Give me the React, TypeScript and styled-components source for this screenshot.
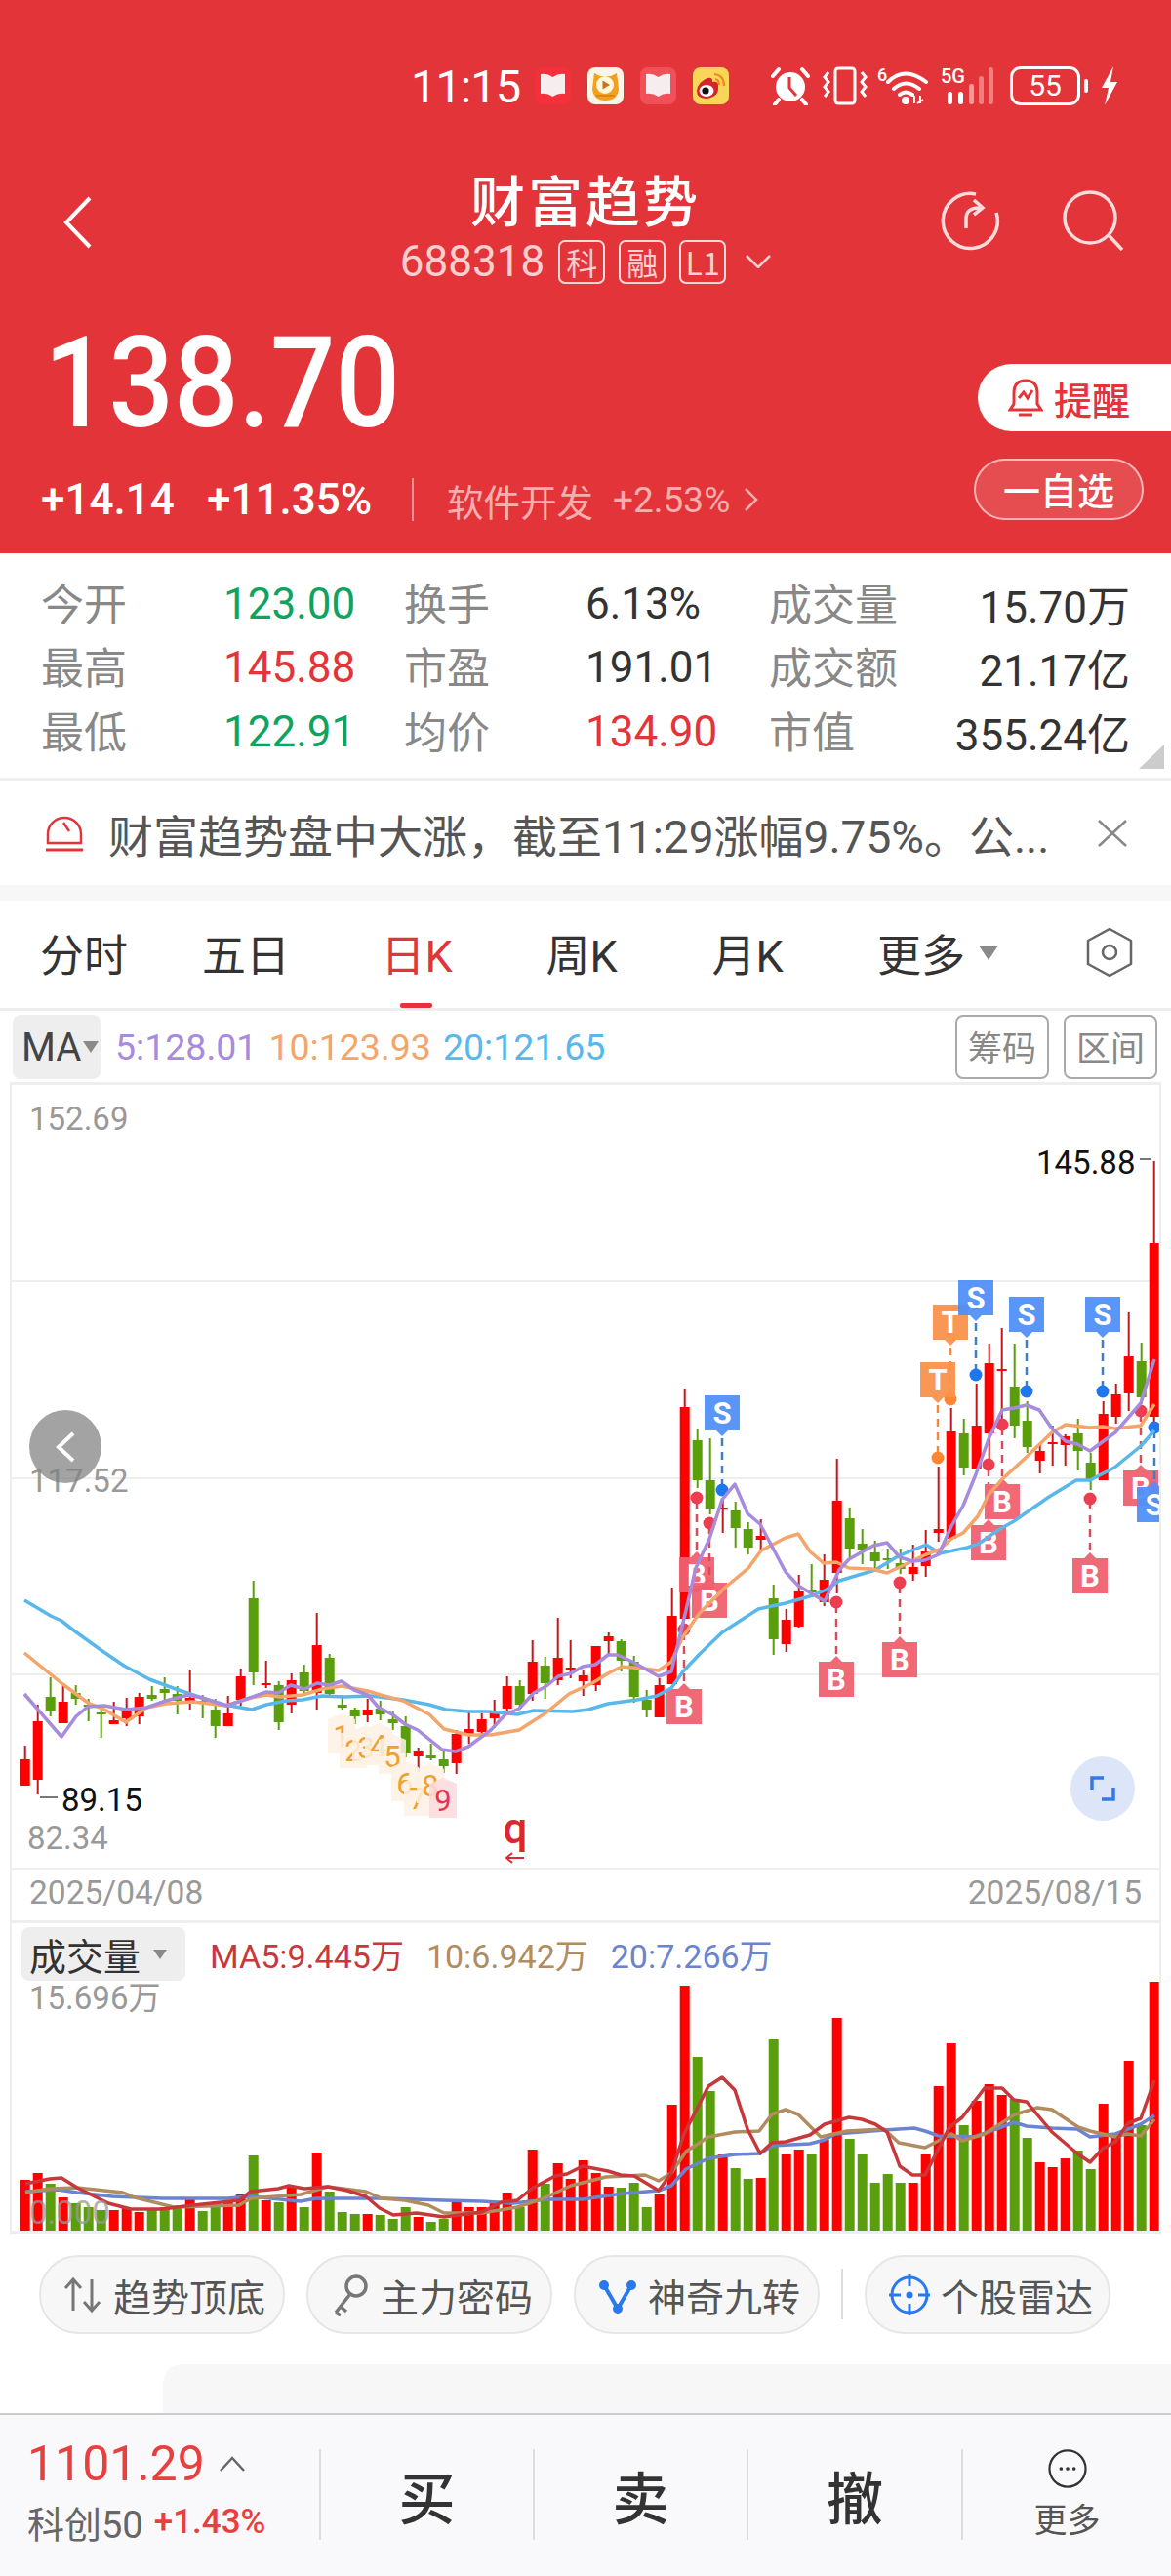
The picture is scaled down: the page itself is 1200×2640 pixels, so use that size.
import React from 'react';
import styled, { createGlobalStyle } from 'styled-components';

const GlobalStyle = createGlobalStyle`
  html, body { margin: 0; padding: 0; background: #fff; }
  * { box-sizing: border-box; }
  body { font-family: Roboto, "Noto Sans CJK SC", sans-serif; }
`;

const Page = styled.div`
  width: 1200px;
  height: 2640px;
  overflow: hidden;
  display: flex;
  flex-direction: column;
  background: #fff;
`;

/* header */
const Header = styled.header`
  height: 567px;
  flex: none;
  background: #e33539;
  color: #fff;
`;

const StatusBar = styled.div`
  height: 176px;
  padding-left: 421px;
  display: flex;
  align-items: center;
`;

const Time = styled.span`
  font-size: 47px;
  letter-spacing: -1px;
  width: 127px;
  flex: none;
`;

const AppIcons = styled.div`
  display: flex;
  gap: 17px;
  margin-right: 43px;
`;

const SysIcons = styled.div`
  display: flex;
  align-items: center;
`;

const Battery = styled.div`
  width: 72px;
  height: 40px;
  margin-left: 15px;
  border: 3px solid #fff;
  border-radius: 11px;
  font-size: 30px;
  line-height: 34px;
  text-align: center;
  position: relative;
  &::after {
    content: '';
    position: absolute;
    right: -11px;
    top: 10px;
    width: 4px;
    height: 14px;
    border-radius: 2px;
    background: #fff;
  }
`;

const NavBar = styled.div`
  height: 120px;
  display: grid;
  grid-template-columns: 1fr auto 1fr;
`;

const NavBack = styled.div`
  padding: 25px 0 0 63px;
`;

const NavCenter = styled.div`
  display: flex;
  flex-direction: column;
  align-items: center;
`;

const NavTitle = styled.div`
  font-family: "Noto Sans CJK SC", sans-serif;
  font-size: 56px;
  line-height: 54px;
  font-weight: 500;
  letter-spacing: 3px;
`;

const NavSub = styled.div`
  margin-top: 12px;
  display: flex;
  align-items: center;
  color: #f9cfcf;
  font-size: 44px;
`;

const Badge = styled.span`
  width: 48px;
  height: 45px;
  margin-left: 14px;
  border: 2px solid #f9dada;
  border-radius: 7px;
  font-family: "Noto Sans CJK SC", sans-serif;
  font-size: 32px;
  line-height: 40px;
  text-align: center;
`;

const NavActions = styled.div`
  display: flex;
  justify-content: flex-end;
  gap: 62px;
  padding: 18px 48px 0 0;
`;

const Quote = styled.div`
  height: 271px;
  display: flex;
  justify-content: space-between;
`;

const QuoteLeft = styled.div`
  padding-left: 42px;
`;

const Price = styled.div`
  margin: 47px 0 0 3px;
  font-size: 130px;
  line-height: 100px;
  font-weight: 500;
  transform: scaleX(0.9);
  transform-origin: left center;
`;

const ChangeRow = styled.div`
  margin-top: 47px;
  height: 44px;
  display: flex;
  align-items: center;
  font-size: 44px;
  font-weight: 500;
`;

const ChangeValue = styled.span<{ $width: number }>`
  width: ${({ $width }) => $width}px;
`;

const Sector = styled.div`
  height: 44px;
  padding-left: 34px;
  border-left: 2px solid rgba(255, 255, 255, 0.45);
  display: flex;
  align-items: center;
  color: #f6aeae;
  font-weight: 400;
  font-size: 37.5px;
`;

const SectorChange = styled.span`
  margin: 0 14px 0 20px;
  font-size: 37px;
`;

const QuoteRight = styled.div`
  display: flex;
  flex-direction: column;
  align-items: flex-end;
  padding-top: 77px;
`;

const RemindButton = styled.div`
  width: 198px;
  height: 69px;
  padding-left: 31px;
  display: flex;
  align-items: center;
  gap: 11px;
  background: #fff;
  border-radius: 35px 0 0 35px;
  color: #e33539;
  font-family: "Noto Sans CJK SC", sans-serif;
  font-size: 39px;
  font-weight: 500;
  line-height: 62px;
`;

const FollowButton = styled.div`
  width: 174px;
  height: 63px;
  margin: 28px 28px 0 0;
  border: 2px solid rgba(255, 255, 255, 0.6);
  border-radius: 32px;
  background: rgba(255, 255, 255, 0.12);
  font-family: "Noto Sans CJK SC", sans-serif;
  font-size: 38px;
  font-weight: 500;
  line-height: 57px;
  text-align: center;
`;

/* stats */
const Stats = styled.section`
  position: relative;
  height: 233px;
  flex: none;
  padding: 19px 42px 0 42px;
  display: grid;
  grid-template-columns: 187px 185px 186px 188px 140px 1fr;
  grid-auto-rows: 65.5px;
  align-items: center;
  border-bottom: 3px solid #eee;
  &::after {
    content: '';
    position: absolute;
    right: 7px;
    bottom: 9px;
    border-style: solid;
    border-width: 0 0 25px 26px;
    border-color: transparent transparent #ccc transparent;
  }
`;

const StatLabel = styled.span`
  margin-top: -4px;
  color: #888;
  font-family: "Noto Sans CJK SC", sans-serif;
  font-size: 44px;
`;

const StatValue = styled.span<{ $tone?: 'up' | 'down'; $end?: boolean }>`
  color: ${({ $tone }) => ($tone === 'up' ? '#e33539' : $tone === 'down' ? '#0fa35f' : '#333')};
  font-size: 44px;
  text-align: ${({ $end }) => ($end ? 'right' : 'left')};
`;

/* news */
const News = styled.section`
  height: 123px;
  flex: none;
  padding: 0 45px 0 46px;
  display: flex;
  align-items: center;
  gap: 25px;
  color: #555;
  font-size: 46px;
  border-bottom: 16px solid #f7f7f7;
`;

const NewsText = styled.span`
  flex: 1;
  white-space: nowrap;
  font-family: Roboto, "Noto Sans CJK SC", sans-serif;
`;

/* tabs */
const Tabs = styled.nav`
  height: 113px;
  flex: none;
  padding-left: 1px;
  display: grid;
  grid-template-columns: 170px 162px 188px 150px 190px 200px 152px;
  border-bottom: 3px solid #eee;
`;

const Tab = styled.div<{ $active?: boolean }>`
  position: relative;
  display: flex;
  align-items: center;
  justify-content: center;
  gap: 14px;
  padding-bottom: 4px;
  color: ${({ $active }) => ($active ? '#e33539' : '#333')};
  font-family: Roboto, "Noto Sans CJK SC", sans-serif;
  font-size: 45px;
  &::after {
    content: '';
    display: ${({ $active }) => ($active ? 'block' : 'none')};
    position: absolute;
    left: 77px;
    bottom: 0;
    width: 33px;
    height: 5px;
    border-radius: 2px;
    background: #e33539;
  }
`;

const Caret = styled.span<{ $size?: number }>`
  border-style: solid;
  border-width: ${({ $size = 15 }) => `${$size}px ${$size * 0.72}px 0`};
  border-color: #8a8a8a transparent transparent;
`;

const MaRow = styled.div`
  height: 73px;
  flex: none;
  padding: 4px 14px 3px 13px;
  display: flex;
  align-items: center;
  font-size: 37.5px;
`;

const MaSelect = styled.div`
  width: 90px;
  height: 66px;
  margin-right: 15px;
  padding-left: 9px;
  display: flex;
  align-items: center;
  gap: 2px;
  background: #eee;
  border-radius: 8px;
  color: #444;
  font-size: 40px;
`;

const MaValue = styled.span<{ $color: string }>`
  margin-right: 12px;
  color: ${({ $color }) => $color};
`;

const ToolGroup = styled.div`
  margin-left: auto;
  display: flex;
  gap: 15px;
`;

const ToolButton = styled.div`
  width: 96px;
  height: 66px;
  border: 2px solid #aaa;
  border-radius: 8px;
  color: #888;
  font-family: "Noto Sans CJK SC", sans-serif;
  font-size: 35px;
  line-height: 60px;
  text-align: center;
`;

/* chart panels */
const PricePanel = styled.div`
  position: relative;
  height: 859px;
  flex: none;
  margin: 0 10px;
  border: solid #eee;
  border-width: 3px 2px 0;
`;

const ChartSvg = styled.svg`
  display: block;
`;

const CollapseButton = styled.div`
  position: absolute;
  left: 18px;
  top: 333px;
  width: 74px;
  height: 75px;
  display: flex;
  align-items: center;
  justify-content: center;
  border-radius: 50%;
  background: rgba(128, 128, 128, 0.72);
`;

const ExpandButton = styled.div`
  position: absolute;
  left: 1085px;
  top: 688px;
  width: 66px;
  height: 66px;
  display: flex;
  align-items: center;
  justify-content: center;
  border-radius: 50%;
  background: #dce6f8;
`;

const DateRow = styled.div`
  position: absolute;
  left: 18px;
  right: 18px;
  bottom: 8px;
  display: flex;
  justify-content: space-between;
  color: #999;
  font-size: 33.5px;
  line-height: 40px;
`;

const VolumePanel = styled.div`
  height: 322px;
  flex: none;
  margin: 0 10px;
  border: solid #eee;
  border-width: 3px 2px 4px;
`;

const VolumeHeader = styled.div`
  height: 59px;
  padding: 4px 0 0 10px;
  display: flex;
  align-items: center;
  font-size: 34px;
`;

const VolumeSelect = styled.div`
  width: 168px;
  height: 55px;
  margin-right: 25px;
  padding-left: 8px;
  display: flex;
  align-items: center;
  gap: 13px;
  background: #eee;
  border-radius: 8px;
  color: #333;
  font-family: "Noto Sans CJK SC", sans-serif;
  font-size: 38px;
`;

const VolumeValue = styled.span<{ $color: string }>`
  margin-right: 23px;
  color: ${({ $color }) => $color};
`;

/* chips */
const ChipRow = styled.div`
  height: 133px;
  flex: none;
  padding: 21px 0 0 40px;
  display: flex;
  align-items: flex-start;
  gap: 22px;
`;

const Chip = styled.div`
  width: 252px;
  height: 81px;
  padding-left: 23px;
  display: flex;
  align-items: center;
  gap: 11px;
  background: #f7f7f7;
  border: 2px solid #e6e6e6;
  border-radius: 40px;
  color: #555;
  font-family: "Noto Sans CJK SC", sans-serif;
  font-size: 39px;
`;

const ChipDivider = styled.div`
  width: 2px;
  height: 52px;
  margin-top: 14px;
  background: #ddd;
`;

const AdStub = styled.div`
  height: 50px;
  flex: none;
  margin-left: 167px;
  background: #f7f7f8;
  border-radius: 20px 0 0 0;
`;

/* footer */
const Footer = styled.footer`
  flex: 1;
  padding-top: 35px;
  display: grid;
  grid-template-columns: 327px 219px 219px 220px 1fr;
  grid-template-rows: 93px;
  background: #f9f9fb;
  border-top: 2px solid #ccc;
`;

const IndexCell = styled.div`
  padding-left: 28px;
`;

const IndexPrice = styled.div`
  margin-top: -5px;
  height: 40px;
  display: flex;
  align-items: center;
  gap: 14px;
  color: #e8403f;
  font-size: 50px;
`;

const IndexRow = styled.div`
  margin-top: 19px;
  height: 40px;
  display: flex;
  align-items: center;
  gap: 11px;
  color: #666;
  font-size: 38px;
`;

const IndexChange = styled.span`
  color: #e8403f;
  font-size: 35px;
  font-weight: 500;
`;

const ActionCell = styled.div`
  display: flex;
  flex-direction: column;
  align-items: center;
  justify-content: center;
  border-left: 2px solid #ddd;
  color: #333;
  font-family: "Noto Sans CJK SC", sans-serif;
  font-size: 58px;
  font-weight: 500;
`;

const MoreLabel = styled.span`
  margin-top: 9px;
  color: #555;
  font-size: 34px;
  font-weight: 400;
  line-height: 44px;
`;

/* svg text */
const AxisText = styled.text<{ $dark?: boolean }>`
  fill: ${({ $dark }) => ($dark ? '#111' : '#999')};
  font-family: Roboto, "Noto Sans CJK SC", sans-serif;
  font-size: 33px;
  dominant-baseline: central;
`;

const MarkerText = styled.text`
  fill: #fff;
  font-family: Roboto, sans-serif;
  font-size: 31px;
  font-weight: 700;
  text-anchor: middle;
  dominant-baseline: central;
`;

const SeqText = styled.text<{ $last?: boolean }>`
  fill: ${({ $last }) => ($last ? '#e8334a' : '#f0a030')};
  font-family: Roboto, sans-serif;
  font-size: 31px;
  text-anchor: middle;
  dominant-baseline: central;
`;

const FlagText = styled.text`
  fill: #d9282f;
  font-family: Roboto, sans-serif;
  font-size: 44px;
  font-weight: 500;
  text-anchor: middle;
`;

/* data, in page pixels: colour, body top, body bottom, high, low, volume top */
type Candle = ['r' | 'g', number, number, number, number, number];

const candles: Candle[] = [
  ['r', 1803, 1830, 1789, 1830, 2234], ['r', 1764, 1824, 1747, 1839, 2227], ['g', 1739, 1753, 1719, 1759, 2238],
  ['r', 1744, 1766, 1728, 1766, 2252], ['g', 1735, 1741, 1727, 1747, 2258], ['g', 1747, 1749, 1741, 1764, 2262],
  ['g', 1755, 1756, 1748, 1781, 2265], ['r', 1763, 1767, 1744, 1767, 2265], ['r', 1754, 1761, 1740, 1769, 2263],
  ['r', 1739, 1759, 1735, 1767, 2267], ['g', 1737, 1741, 1728, 1743, 2265], ['g', 1731, 1735, 1719, 1742, 2262],
  ['g', 1736, 1743, 1728, 1757, 2262], ['r', 1740, 1743, 1711, 1752, 2253], ['g', 1743, 1744, 1737, 1761, 2266],
  ['g', 1752, 1769, 1741, 1781, 2257], ['r', 1756, 1769, 1738, 1769, 2257], ['r', 1718, 1742, 1710, 1748, 2249],
  ['g', 1638, 1714, 1620, 1727, 2209], ['r', 1725, 1726, 1702, 1730, 2255], ['g', 1727, 1765, 1723, 1773, 2257],
  ['r', 1722, 1747, 1715, 1756, 2242], ['g', 1714, 1733, 1706, 1737, 2262], ['r', 1686, 1735, 1653, 1752, 2206],
  ['g', 1699, 1736, 1695, 1737, 2246], ['g', 1747, 1750, 1737, 1752, 2267], ['g', 1752, 1759, 1750, 1767, 2269],
  ['r', 1752, 1758, 1741, 1765, 2269], ['g', 1751, 1757, 1743, 1763, 2270], ['g', 1762, 1766, 1753, 1773, 2274],
  ['g', 1769, 1797, 1759, 1801, 2262], ['r', 1795, 1800, 1791, 1816, 2272], ['g', 1799, 1802, 1787, 1804, 2277],
  ['g', 1803, 1810, 1795, 1817, 2274], ['r', 1777, 1807, 1773, 1818, 2257], ['r', 1772, 1777, 1755, 1787, 2262],
  ['r', 1762, 1775, 1756, 1780, 2262], ['r', 1753, 1761, 1742, 1771, 2258], ['r', 1728, 1751, 1718, 1754, 2247],
  ['g', 1728, 1747, 1722, 1752, 2262], ['r', 1703, 1736, 1681, 1743, 2203], ['g', 1707, 1725, 1698, 1741, 2238],
  ['r', 1699, 1722, 1658, 1727, 2217], ['r', 1709, 1710, 1681, 1720, 2233], ['r', 1717, 1723, 1711, 1738, 2214],
  ['r', 1687, 1727, 1687, 1733, 2227], ['r', 1677, 1682, 1673, 1697, 2241], ['g', 1682, 1702, 1680, 1713, 2242],
  ['g', 1703, 1739, 1697, 1745, 2237], ['g', 1742, 1752, 1732, 1760, 2262], ['r', 1727, 1760, 1720, 1760, 2249],
  ['r', 1656, 1726, 1627, 1726, 2157], ['r', 1442, 1659, 1423, 1659, 2035], ['g', 1476, 1517, 1464, 1525, 2108],
  ['g', 1517, 1546, 1474, 1552, 2143], ['r', 1545, 1547, 1537, 1571, 2208], ['g', 1548, 1566, 1539, 1586, 2222],
  ['g', 1567, 1586, 1560, 1593, 2233], ['r', 1574, 1578, 1557, 1588, 2232], ['g', 1638, 1680, 1624, 1696, 2090],
  ['r', 1660, 1685, 1649, 1693, 2208], ['r', 1631, 1667, 1614, 1668, 2203], ['g', 1630, 1632, 1603, 1632, 2208],
  ['r', 1619, 1642, 1593, 1646, 2193], ['r', 1538, 1612, 1495, 1633, 2068], ['g', 1556, 1587, 1545, 1597, 2192],
  ['g', 1582, 1589, 1567, 1603, 2208], ['g', 1591, 1600, 1579, 1607, 2237], ['g', 1597, 1598, 1587, 1608, 2228],
  ['g', 1602, 1608, 1587, 1613, 2237], ['r', 1606, 1613, 1583, 1620, 2237], ['r', 1590, 1605, 1568, 1616, 2208],
  ['r', 1567, 1571, 1503, 1580, 2138], ['r', 1467, 1577, 1443, 1578, 2094], ['g', 1469, 1504, 1454, 1512, 2178],
  ['r', 1461, 1506, 1418, 1506, 2153], ['r', 1397, 1469, 1377, 1498, 2136], ['r', 1403, 1405, 1361, 1457, 2147],
  ['g', 1421, 1461, 1377, 1474, 2151], ['g', 1456, 1483, 1436, 1489, 2191], ['r', 1487, 1497, 1480, 1510, 2216],
  ['r', 1478, 1479, 1461, 1502, 2221], ['r', 1472, 1481, 1470, 1502, 2212], ['g', 1469, 1487, 1454, 1507, 2204],
  ['g', 1499, 1516, 1489, 1527, 2223], ['r', 1449, 1517, 1436, 1517, 2156], ['r', 1429, 1452, 1418, 1459, 2190],
  ['r', 1390, 1428, 1345, 1446, 2112], ['g', 1395, 1432, 1376, 1439, 2178], ['r', 1274, 1452, 1190, 1457, 2031],
];

const candleX = (i: number) => 25.7 + 13 * i;

const ma20 = '25,1640 52,1656 63,1661 77,1672 102,1690 127,1707 153,1721 180,1731 207,1740 230,1747 258,1752 273,1747 293,1743 310,1742 330,1738 353,1739 380,1738 413,1742 440,1747 457,1752 480,1754 500,1754 530,1757 547,1753 587,1754 603,1752 623,1746 653,1742 673,1738 688,1730 700,1713 717,1695 740,1673 777,1649 805,1643 833,1635 847,1629 860,1620 897,1609 920,1595 949,1583 963,1592 991,1586 1003,1582 1023,1568 1039,1559 1075,1534 1103,1517 1117,1517 1142,1504 1169,1482 1183,1466';
const ma10 = '25,1694 63,1725 90,1745 107,1752 129,1765 150,1750 170,1746 197,1744 232,1748 257,1740 273,1737 287,1739 310,1737 330,1731 350,1728 377,1733 390,1737 413,1743 440,1757 455,1772 480,1778 503,1778 532,1773 560,1755 583,1736 607,1725 623,1715 637,1708 660,1710 675,1712 688,1703 700,1677 717,1653 743,1627 767,1607 780,1589 805,1576 818,1572 830,1590 844,1602 857,1601 870,1607 893,1608 909,1612 922,1606 949,1593 963,1588 975,1577 987,1571 1002,1554 1013,1532 1027,1516 1052,1493 1078,1468 1092,1460 1117,1463 1130,1462 1143,1464 1169,1461 1183,1439';
const ma5 = '25,1736 63,1780 78,1759 90,1749 107,1748 129,1752 150,1750 170,1743 193,1737 207,1740 232,1748 250,1742 273,1734 285,1735 298,1727 312,1731 325,1725 337,1727 350,1723 363,1732 377,1737 388,1750 402,1757 415,1767 428,1773 453,1793 467,1795 480,1790 503,1773 518,1757 532,1751 547,1735 560,1728 572,1718 585,1715 597,1708 610,1706 623,1696 633,1696 648,1703 675,1718 688,1713 700,1663 713,1607 727,1577 740,1537 753,1521 766,1551 779,1562 805,1611 818,1625 845,1641 860,1609 870,1598 895,1584 909,1581 922,1596 935,1600 948,1599 962,1593 975,1564 987,1543 1000,1511 1013,1475 1027,1445 1039,1443 1052,1440 1065,1445 1078,1464 1092,1477 1104,1480 1117,1487 1143,1468 1169,1438 1183,1393';

const volBlue = '26,2246 59,2244 79,2247 115,2251 166,2253 233,2253 257,2251 308,2256 324,2253 395,2253 455,2255 494,2256 526,2258 561,2254 597,2254 638,2248 675,2245 688,2240 703,2223 726,2212 753,2208 779,2207 791,2199 830,2197 845,2193 856,2187 906,2183 937,2181 948,2184 962,2189 998,2190 1021,2182 1039,2175 1052,2179 1078,2181 1104,2182 1117,2190 1143,2187 1169,2177 1183,2168';
const volTan = '26,2247 51,2243 79,2242 126,2247 138,2252 178,2262 245,2260 257,2253 308,2249 336,2241 375,2246 391,2253 415,2255 439,2260 455,2268 494,2268 530,2262 557,2253 585,2240 621,2231 661,2229 675,2235 688,2227 703,2205 726,2190 753,2185 778,2184 791,2167 805,2162 818,2167 841,2190 868,2184 906,2182 921,2196 948,2201 975,2187 986,2194 1009,2187 1040,2167 1063,2160 1078,2162 1105,2180 1117,2184 1143,2190 1155,2187 1169,2189 1183,2172';
const volRed = '26,2238 51,2233 63,2232 79,2242 111,2258 134,2264 166,2264 198,2260 245,2255 257,2246 285,2243 296,2240 312,2243 336,2241 356,2245 375,2251 389,2263 403,2270 427,2268 455,2272 494,2267 514,2257 530,2255 545,2243 569,2230 581,2228 597,2220 623,2225 636,2229 650,2230 675,2245 688,2227 701,2187 726,2138 740,2129 753,2142 766,2182 779,2207 791,2196 805,2195 830,2188 845,2177 870,2170 883,2172 897,2177 909,2185 922,2220 935,2229 948,2229 973,2180 986,2170 1009,2140 1027,2140 1039,2152 1052,2154 1078,2185 1104,2207 1117,2216 1130,2202 1143,2195 1156,2176 1169,2171 1183,2132';

type Marker = { kind: 'S' | 'T' | 'B'; x: number; top: number; dot: number; up?: boolean };

const markers: Marker[] = [
  { kind: 'B', x: 714, top: 1596, dot: 1535 },
  { kind: 'B', x: 727, top: 1622, dot: 1561 },
  { kind: 'B', x: 701, top: 1731, dot: 1670 },
  { kind: 'B', x: 857, top: 1703, dot: 1642 },
  { kind: 'B', x: 922, top: 1683, dot: 1622 },
  { kind: 'B', x: 1013, top: 1563, dot: 1501 },
  { kind: 'B', x: 1027, top: 1521, dot: 1460 },
  { kind: 'B', x: 1117, top: 1597, dot: 1536 },
  { kind: 'B', x: 1169, top: 1507, dot: 1446 },
  { kind: 'T', x: 974, top: 1337, dot: 1434 },
  { kind: 'T', x: 961, top: 1396, dot: 1494 },
  { kind: 'S', x: 740, top: 1430, dot: 1527 },
  { kind: 'S', x: 1000, top: 1312, dot: 1409 },
  { kind: 'S', x: 1052, top: 1329, dot: 1426 },
  { kind: 'S', x: 1130, top: 1329, dot: 1426 },
  { kind: 'S', x: 1183, top: 1524, dot: 1463, up: true },
];

const markerColors = {
  S: { fill: '#4f8ff7', dot: '#1f77f0', dash: '#3f7fc8' },
  T: { fill: '#f9924a', dot: '#ff8533', dash: '#f28a3c' },
  B: { fill: '#f0606e', dot: '#ec3e50', dash: '#d94a5a' },
};

const sequence: [string, number, number][] = [
  ['1', 350, 1779], ['2', 362, 1794], ['3', 375, 1791], ['4', 388, 1789], ['5', 402, 1800],
  ['6', 415, 1828], ['7', 428, 1843], ['8', 441, 1830], ['9', 454, 1845],
];

const CandleMark = ({ c, i }: { c: Candle; i: number }) => {
  const [tone, top, bottom, high, low] = c;
  const x = candleX(i);
  const body = tone === 'r' ? '#ff0000' : '#5a9e0c';
  const wick = tone === 'r' ? '#c4161c' : '#5a9e0c';
  return (
    <g>
      <line x1={x} x2={x} y1={high} y2={low} stroke={wick} strokeWidth="2" />
      <rect x={x - 5} y={top} width="10" height={Math.max(bottom - top, 2)} fill={body} />
    </g>
  );
};

const SignalMark = ({ m }: { m: Marker }) => {
  const col = markerColors[m.kind];
  const tipUp = m.up || m.kind === 'B';
  const { x, top } = m;
  const shape = tipUp
    ? `M${x - 18} ${top}H${x - 6}L${x} ${top - 6}L${x + 6} ${top}H${x + 18}V${top + 36}H${x - 18}Z`
    : `M${x - 18} ${top}H${x + 18}V${top + 36}H${x + 6}L${x} ${top + 42}L${x - 6} ${top + 36}H${x - 18}Z`;
  const from = tipUp ? top - 8 : top + 44;
  return (
    <g>
      <line x1={x} x2={x} y1={from} y2={m.dot} stroke={col.dash} strokeWidth="2.5" strokeDasharray="8 6" />
      <circle cx={x} cy={m.dot} r="6.5" fill={col.dot} />
      <path d={shape} fill={col.fill} fillOpacity="0.94" />
      <MarkerText x={x} y={top + 18}>{m.kind}</MarkerText>
    </g>
  );
};

const PriceChart = () => (
  <ChartSvg width="1176" height="804" viewBox="12 1112 1176 804">
    {[1313, 1515, 1716].map((y) => (
      <line key={y} x1="12" x2="1188" y1={y} y2={y} stroke="#eee" strokeWidth="2" />
    ))}
    <line x1="12" x2="1188" y1="1915" y2="1915" stroke="#eee" strokeWidth="2" />
    <AxisText x="30" y="1146">152.69</AxisText>
    <AxisText x="30" y="1517">117.52</AxisText>
    <AxisText x="28" y="1883">82.34</AxisText>
    <AxisText $dark x="63" y="1844">89.15</AxisText>
    <line x1="41" x2="59" y1="1842" y2="1842" stroke="#777" strokeWidth="2" />
    <AxisText $dark x="1062" y="1191">145.88</AxisText>
    <line x1="1168" x2="1179" y1="1188" y2="1188" stroke="#777" strokeWidth="2" />
    {candles.map((c, i) => <CandleMark key={i} c={c} i={i} />)}
    {sequence.map(([n, x, y]) => (
      <g key={n}>
        <path
          d={`M${x - 14} ${y - 17}L${x} ${y - 23}L${x + 14} ${y - 17}V${y + 18}H${x - 14}Z`}
          fill={n === '9' ? '#fcd9dc' : '#fdf1e4'}
          fillOpacity="0.85"
        />
        <SeqText $last={n === '9'} x={x} y={y}>{n}</SeqText>
      </g>
    ))}
    {markers.map((m) => <SignalMark key={`${m.kind}${m.x}`} m={m} />)}
    <polyline points={ma20} fill="none" stroke="#5ab7ec" strokeWidth="3.5" strokeLinejoin="round" />
    <polyline points={ma10} fill="none" stroke="#f4a56a" strokeWidth="3.5" strokeLinejoin="round" />
    <polyline points={ma5} fill="none" stroke="#a78bdc" strokeWidth="3.5" strokeLinejoin="round" />
    <FlagText x="528" y="1889">q</FlagText>
    <path d="M537 1904H519M525 1899L519 1904L525 1909" fill="none" stroke="#d9282f" strokeWidth="2" />
  </ChartSvg>
);

const VolumeChart = () => (
  <ChartSvg width="1176" height="256" viewBox="12 2030 1176 256">
    <AxisText x="30" y="2047">15.696万</AxisText>
    {candles.map((c, i) => (
      <rect
        key={i}
        x={candleX(i) - 5}
        y={c[5]}
        width="10"
        height={2286 - c[5]}
        fill={c[0] === 'r' ? '#ff0000' : '#5a9e0c'}
      />
    ))}
    <polyline points={volBlue} fill="none" stroke="#6a84d0" strokeWidth="3.5" strokeLinejoin="round" />
    <polyline points={volTan} fill="none" stroke="#b08c5e" strokeWidth="3.5" strokeLinejoin="round" />
    <polyline points={volRed} fill="none" stroke="#c8383a" strokeWidth="3.5" strokeLinejoin="round" />
    <AxisText x="30" y="2267" opacity="0.75">0.000</AxisText>
  </ChartSvg>
);

/* icons */
const BookIcon = ({ bg }: { bg: string }) => (
  <svg width="37" height="38" viewBox="0 0 37 38">
    <rect width="37" height="38" rx="8" fill={bg} />
    <path d="M6 7Q13 6 18.5 10Q24 6 31 7V27Q24 26 18.5 30Q13 26 6 27Z" fill="#f6eeee" />
  </svg>
);

const CatIcon = () => (
  <svg width="37" height="38" viewBox="0 0 37 38">
    <rect width="37" height="38" rx="8" fill="#fbf5e8" />
    <path d="M7 6L13 9H24L30 6L32 22Q31 34 18.5 34Q6 34 5 22Z" fill="#f2a01e" />
    <circle cx="18" cy="18" r="9" fill="#fff6e0" />
    <path d="M15.5 13.5L23 18L15.5 22.5Z" fill="#c9711a" />
    <path d="M9 29H28" stroke="#d9861a" strokeWidth="2" />
  </svg>
);

const WeiboIcon = () => (
  <svg width="37" height="38" viewBox="0 0 37 38">
    <rect width="37" height="38" rx="8" fill="#f9d65a" />
    <path d="M4 24Q5 15 15 11Q21 10 20 15Q27 14 26 20Q27 30 14 32Q4 32 4 24Z" fill="#d8232a" />
    <ellipse cx="14" cy="24" rx="7.5" ry="6" fill="#fff" />
    <circle cx="13" cy="24" r="3.6" fill="#111" />
    <path d="M22 7Q32 8 32 19M23 12Q27 13 27 18" fill="none" stroke="#f08a1e" strokeWidth="2.2" />
  </svg>
);

const AlarmIcon = () => (
  <svg width="40" height="40" viewBox="0 0 40 40">
    <circle cx="20" cy="21" r="15" fill="#fff" />
    <path d="M19 11V22L26 30" fill="none" stroke="#e33539" strokeWidth="3" />
    <path d="M2 10L8 3M38 10L32 3M8 34L4 39M32 34L36 39" stroke="#fff" strokeWidth="4" strokeLinecap="round" />
  </svg>
);

const VibrateIcon = () => (
  <svg width="46" height="40" viewBox="0 0 46 40" style={{ marginLeft: 13 }}>
    <rect x="13" y="2" width="20" height="36" rx="3" fill="none" stroke="#fff" strokeWidth="3" />
    <path d="M6 6L2 11L6 16L2 21L6 26L2 31M40 6L44 11L40 16L44 21L40 26L44 31" fill="none" stroke="#fff" strokeWidth="3" />
  </svg>
);

const WifiIcon = () => (
  <svg width="54" height="40" viewBox="0 0 54 40" style={{ marginLeft: 10 }}>
    <text x="0" y="15" fill="#fff" fontFamily="Roboto, sans-serif" fontSize="18" fontWeight="500">6</text>
    <path d="M11 16Q28 -1 50 16M17 23Q29 12 43 23M23 29Q29 24 36 29" fill="none" stroke="#fff" strokeWidth="4" strokeLinecap="round" />
    <circle cx="29" cy="35" r="4" fill="#fff" />
    <path d="M38 38V30M44 30V38M41 38L47 34" stroke="#fff" strokeWidth="1.8" fill="none" />
  </svg>
);

const SignalIcon = () => (
  <svg width="56" height="40" viewBox="0 0 56 40" style={{ marginLeft: 11 }}>
    <text x="0" y="17" fill="#fff" fontFamily="Roboto, sans-serif" fontSize="20" fontWeight="500">5G</text>
    <rect x="7" y="26" width="5" height="13" rx="2.5" fill="#fff" />
    <rect x="18" y="26" width="5" height="13" rx="2.5" fill="#fff" />
    <rect x="29" y="18" width="5" height="21" rx="2.5" fill="#f59a9a" />
    <rect x="39" y="10" width="5" height="29" rx="2.5" fill="#ee8080" />
    <rect x="49" y="1" width="5" height="38" rx="2.5" fill="#ee8080" />
  </svg>
);

const BoltIcon = () => (
  <svg width="20" height="42" viewBox="0 0 20 42" style={{ marginLeft: 20 }}>
    <path d="M14 1L2 23H9L5 41L18 17H11Z" fill="#fff" />
  </svg>
);

const BackIcon = () => (
  <svg width="32" height="54" viewBox="0 0 32 54">
    <path d="M29 2L5 27L29 52" fill="none" stroke="#fff" strokeWidth="4" />
  </svg>
);

const ShareIcon = () => (
  <svg width="64" height="64" viewBox="0 0 64 64">
    <path d="M38 5A28 28 0 1 0 59 24" fill="none" stroke="#fbdcdc" strokeWidth="3.5" />
    <path d="M28 40V30Q28 19 42 19M36 11L45 19L36 26" fill="none" stroke="#fbdcdc" strokeWidth="3.5" />
  </svg>
);

const SearchIcon = () => (
  <svg width="64" height="64" viewBox="0 0 64 64">
    <circle cx="29" cy="29" r="26" fill="none" stroke="#fbdcdc" strokeWidth="3.5" />
    <path d="M49 48L62 62" stroke="#fbdcdc" strokeWidth="3.5" />
  </svg>
);

const SmallChevron = () => (
  <svg width="26" height="14" viewBox="0 0 26 14" style={{ marginLeft: 20 }}>
    <path d="M1 1L13 13L25 1" fill="none" stroke="#f9cfcf" strokeWidth="2.5" />
  </svg>
);

const SectorChevron = () => (
  <svg width="15" height="24" viewBox="0 0 15 24">
    <path d="M2 1L13 12L2 23" fill="none" stroke="#f6aeae" strokeWidth="2.5" />
  </svg>
);

const BellIcon = () => (
  <svg width="36" height="42" viewBox="0 0 36 42">
    <path d="M18 3Q6 3 6 16V27L2 33H34L30 27V16Q30 3 18 3Z" fill="none" stroke="#e33539" strokeWidth="3" />
    <path d="M11 38H25" stroke="#e33539" strokeWidth="3" />
    <path d="M11 21L16 15L20 21L25 13" fill="none" stroke="#e33539" strokeWidth="3" />
  </svg>
);

const LampIcon = () => (
  <svg width="40" height="40" viewBox="0 0 40 40">
    <path d="M3 30V21A17 17 0 0 1 37 21V30Z" fill="none" stroke="#e33539" strokeWidth="2.5" />
    <path d="M19 9L25 18" stroke="#e33539" strokeWidth="2.5" />
    <path d="M1 37H39" stroke="#e33539" strokeWidth="3" />
  </svg>
);

const CloseIcon = () => (
  <svg width="30" height="28" viewBox="0 0 30 28">
    <path d="M1 1L29 27M29 1L1 27" stroke="#888" strokeWidth="2.5" />
  </svg>
);

const HexIcon = () => (
  <svg width="48" height="52" viewBox="0 0 48 52">
    <path d="M24 2L46 14V38L24 50L2 38V14Z" fill="none" stroke="#666" strokeWidth="2.5" strokeLinejoin="round" />
    <circle cx="24" cy="26" r="7" fill="none" stroke="#666" strokeWidth="2.5" />
  </svg>
);

const ArrowsIcon = () => (
  <svg width="40" height="40" viewBox="0 0 40 40">
    <path d="M10 36V5M2 13L10 4L18 13" fill="none" stroke="#777" strokeWidth="3" />
    <path d="M29 4V35M21 27L29 36L37 27" fill="none" stroke="#777" strokeWidth="3" />
  </svg>
);

const KeyIcon = () => (
  <svg width="40" height="44" viewBox="0 0 40 44">
    <circle cx="26" cy="13" r="10" fill="none" stroke="#777" strokeWidth="3.5" />
    <path d="M20 21L5 40M10 34L16 39M5 40L10 43" fill="none" stroke="#777" strokeWidth="3.5" />
  </svg>
);

const NodesIcon = () => (
  <svg width="40" height="40" viewBox="0 0 40 40">
    <path d="M6 10L20 34L34 10" fill="none" stroke="#2878ee" strokeWidth="4" />
    <circle cx="6" cy="10" r="5" fill="#2878ee" />
    <circle cx="34" cy="10" r="5" fill="#2878ee" />
    <circle cx="20" cy="34" r="5" fill="#2878ee" />
  </svg>
);

const RadarIcon = () => (
  <svg width="42" height="44" viewBox="0 0 42 44">
    <circle cx="21" cy="22" r="18" fill="none" stroke="#2878ee" strokeWidth="3" />
    <path d="M21 1V13M21 31V43M0 22H12M30 22H42" stroke="#2878ee" strokeWidth="3" />
    <circle cx="21" cy="22" r="3.5" fill="#2878ee" />
  </svg>
);

const EllipsisIcon = () => (
  <svg width="54" height="54" viewBox="0 0 54 54">
    <circle cx="27" cy="27" r="25" fill="none" stroke="#333" strokeWidth="3" />
    <circle cx="18" cy="27" r="2.5" fill="#333" />
    <circle cx="27" cy="27" r="2.5" fill="#333" />
    <circle cx="36" cy="27" r="2.5" fill="#333" />
  </svg>
);

const stats: { label: string; value: string; tone?: 'up' | 'down'; end?: boolean }[] = [
  { label: '今开', value: '123.00', tone: 'down' },
  { label: '换手', value: '6.13%' },
  { label: '成交量', value: '15.70万', end: true },
  { label: '最高', value: '145.88', tone: 'up' },
  { label: '市盈', value: '191.01' },
  { label: '成交额', value: '21.17亿', end: true },
  { label: '最低', value: '122.91', tone: 'down' },
  { label: '均价', value: '134.90', tone: 'up' },
  { label: '市值', value: '355.24亿', end: true },
];

const tabs = ['分时', '五日', '日K', '周K', '月K'];

const App = () => (
  <Page>
    <GlobalStyle />
    <Header>
      <StatusBar>
        <Time>11:15</Time>
        <AppIcons>
          <BookIcon bg="#f4303a" />
          <CatIcon />
          <BookIcon bg="#f25058" />
          <WeiboIcon />
        </AppIcons>
        <SysIcons>
          <AlarmIcon />
          <VibrateIcon />
          <WifiIcon />
          <SignalIcon />
          <Battery>55</Battery>
          <BoltIcon />
        </SysIcons>
      </StatusBar>
      <NavBar>
        <NavBack><BackIcon /></NavBack>
        <NavCenter>
          <NavTitle>财富趋势</NavTitle>
          <NavSub>
            <span>688318</span>
            <Badge>科</Badge>
            <Badge>融</Badge>
            <Badge>L1</Badge>
            <SmallChevron />
          </NavSub>
        </NavCenter>
        <NavActions>
          <ShareIcon />
          <SearchIcon />
        </NavActions>
      </NavBar>
      <Quote>
        <QuoteLeft>
          <Price>138.70</Price>
          <ChangeRow>
            <ChangeValue $width={170}>+14.14</ChangeValue>
            <ChangeValue $width={210}>+11.35%</ChangeValue>
            <Sector>
              软件开发
              <SectorChange>+2.53%</SectorChange>
              <SectorChevron />
            </Sector>
          </ChangeRow>
        </QuoteLeft>
        <QuoteRight>
          <RemindButton><BellIcon />提醒</RemindButton>
          <FollowButton>一自选</FollowButton>
        </QuoteRight>
      </Quote>
    </Header>

    <Stats>
      {stats.map((s) => (
        <React.Fragment key={s.label}>
          <StatLabel>{s.label}</StatLabel>
          <StatValue $tone={s.tone} $end={s.end}>{s.value}</StatValue>
        </React.Fragment>
      ))}
    </Stats>

    <News>
      <LampIcon />
      <NewsText>财富趋势盘中大涨，截至11:29涨幅9.75%。公...</NewsText>
      <CloseIcon />
    </News>

    <Tabs>
      {tabs.map((t) => <Tab key={t} $active={t === '日K'}>{t}</Tab>)}
      <Tab>更多<Caret /></Tab>
      <Tab><HexIcon /></Tab>
    </Tabs>

    <MaRow>
      <MaSelect>MA<Caret $size={12} /></MaSelect>
      <MaValue $color="#a78bdc">5:128.01</MaValue>
      <MaValue $color="#f4a56a">10:123.93</MaValue>
      <MaValue $color="#5ab7ec">20:121.65</MaValue>
      <ToolGroup>
        <ToolButton>筹码</ToolButton>
        <ToolButton>区间</ToolButton>
      </ToolGroup>
    </MaRow>

    <PricePanel>
      <PriceChart />
      <CollapseButton>
        <svg width="24" height="34" viewBox="0 0 24 34">
          <path d="M20 3L5 17L20 31" fill="none" stroke="#fff" strokeWidth="4" />
        </svg>
      </CollapseButton>
      <ExpandButton>
        <svg width="32" height="32" viewBox="0 0 32 32">
          <path d="M5 17V5H17M27 15V27H15" fill="none" stroke="#3478e8" strokeWidth="3.5" />
        </svg>
      </ExpandButton>
      <DateRow>
        <span>2025/04/08</span>
        <span>2025/08/15</span>
      </DateRow>
    </PricePanel>

    <VolumePanel>
      <VolumeHeader>
        <VolumeSelect>成交量<Caret $size={10} /></VolumeSelect>
        <VolumeValue $color="#c8383a">MA5:9.445万</VolumeValue>
        <VolumeValue $color="#b08c5e">10:6.942万</VolumeValue>
        <VolumeValue $color="#6a84d0">20:7.266万</VolumeValue>
      </VolumeHeader>
      <VolumeChart />
    </VolumePanel>

    <ChipRow>
      <Chip><ArrowsIcon />趋势顶底</Chip>
      <Chip><KeyIcon />主力密码</Chip>
      <Chip><NodesIcon />神奇九转</Chip>
      <ChipDivider />
      <Chip><RadarIcon />个股雷达</Chip>
    </ChipRow>

    <AdStub />

    <Footer>
      <IndexCell>
        <IndexPrice>
          1101.29
          <svg width="28" height="16" viewBox="0 0 28 16">
            <path d="M2 15L14 2L26 15" fill="none" stroke="#666" strokeWidth="2.5" />
          </svg>
        </IndexPrice>
        <IndexRow>科创50<IndexChange>+1.43%</IndexChange></IndexRow>
      </IndexCell>
      <ActionCell>买</ActionCell>
      <ActionCell>卖</ActionCell>
      <ActionCell>撤</ActionCell>
      <ActionCell>
        <EllipsisIcon />
        <MoreLabel>更多</MoreLabel>
      </ActionCell>
    </Footer>
  </Page>
);

export default App;
